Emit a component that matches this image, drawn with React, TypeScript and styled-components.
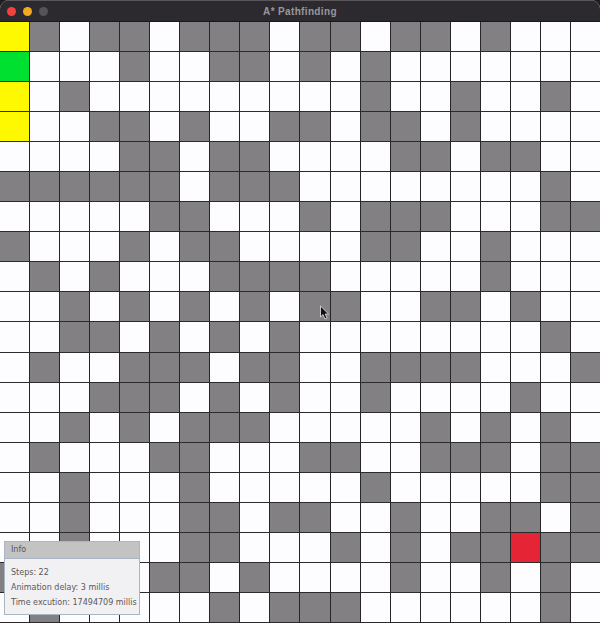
import React from 'react';
import styled, { createGlobalStyle } from 'styled-components';

type CellKind = '.' | '#' | 'y' | 'g' | 'r';

const GRID: string[] = [
  'y#.##.###.##.##.#...',
  'g...#..##.#.#.......',
  'y.#.........#..#..#.',
  'y..##.#..##.##.#....',
  '....##.##....##.##..',
  '######.###........#.',
  '.....##...#.###...##',
  '#...#.##....##..#...',
  '.#.#...####.....#...',
  '..#.#.#.#.##..##.#..',
  '..##.#.#.#........#.',
  '.#..###.##..####...#',
  '...###.#.#..#....#..',
  '..#.#.###.....#.#.#.',
  '.#...##...##..###.##',
  '..#...#.....#.....##',
  '..#...##.##..#..##.#',
  '..#...##...#.#.##r##',
  '#....##.#....#..#.#.',
  '.#.....#.###......#.',
];

const CELL_COLORS: Record<CellKind, string> = {
  '.': '#fdfcfe',
  '#': '#828083',
  y: '#fef800',
  g: '#00e031',
  r: '#e52535',
};

const GlobalStyle = createGlobalStyle`
  html, body {
    margin: 0;
    padding: 0;
    background: #1d1c1f;
    overflow: hidden;
  }
`;

const Window = styled.div`
  position: relative;
  width: 600px;
  height: 623px;
  overflow: hidden;
  border-radius: 9px 9px 0 0;
  background: #fdfcfe;
`;

const TitleBar = styled.header`
  display: flex;
  align-items: center;
  height: 22px;
  box-sizing: border-box;
  padding: 0 0 0 7px;
  gap: 7px;
  background: #2c2a2f;
  border-top: 1px solid #59575b;
  border-bottom: 1px solid #18171a;
`;

const Light = styled.span<{ $color: string }>`
  width: 9px;
  height: 9px;
  border-radius: 50%;
  background: ${(p) => p.$color};
`;

const Title = styled.h1`
  position: absolute;
  top: 5px;
  left: 0;
  right: 0;
  margin: 0;
  text-align: center;
  font: bold 10px/13px "Liberation Sans", Arial, sans-serif;
  letter-spacing: 0.35px;
  color: #99979b;
`;

const Board = styled.div`
  display: grid;
  grid-template-columns: repeat(20, 1fr);
  grid-template-rows: repeat(20, 1fr);
  width: 601px;
  height: 601px;
  margin-left: 0;
  background: #1f1e20;
`;

const Cell = styled.div<{ $kind: CellKind }>`
  background: ${(p) => CELL_COLORS[p.$kind]};
  border-right: 1px solid #262527;
  border-bottom: 1px solid #2b2a2c;
  box-sizing: border-box;
`;

const InfoPanel = styled.section`
  position: absolute;
  left: 4px;
  top: 541px;
  width: 136px;
  height: 74px;
  box-sizing: border-box;
  border: 1px solid #a9b6c4;
  background: #f1f0f2;
`;

const InfoHeader = styled.div`
  height: 17px;
  padding-left: 6px;
  background: #c4c3c4;
  border-bottom: 1px solid #a9b6c4;
  box-sizing: border-box;
  font: 8px/16px "DejaVu Sans", sans-serif;
  color: #555457;
`;

const InfoBody = styled.div`
  display: flex;
  flex-direction: column;
  gap: 5px;
  padding: 9px 0 0 6px;
`;

const InfoLine = styled.div`
  font: 8px/10px "DejaVu Sans", sans-serif;
  color: #59585b;
  white-space: nowrap;
`;

const CursorMark = styled.svg`
  position: absolute;
  left: 319px;
  top: 305px;
`;

export default function App() {
  return (
    <>
      <GlobalStyle />
      <Window>
        <TitleBar>
          <Light $color="#f2423f" />
          <Light $color="#f5a823" />
          <Light $color="#555358" />
          <Title>A* Pathfinding</Title>
        </TitleBar>
        <Board>
          {GRID.flatMap((row, y) =>
            row.split('').map((kind, x) => <Cell key={`${x}-${y}`} $kind={kind as CellKind} />)
          )}
        </Board>
        <CursorMark width="12" height="16" viewBox="0 0 12 16">
          <path d="M1.5 1 L1.5 12 L4 9.6 L6 14 L8 13 L6.2 9 L9.6 9 Z" fill="#111" stroke="#e8e8e8" strokeWidth="0.8" />
        </CursorMark>
        <InfoPanel>
          <InfoHeader>Info</InfoHeader>
          <InfoBody>
            <InfoLine>Steps: 22</InfoLine>
            <InfoLine>Animation delay: 3 millis</InfoLine>
            <InfoLine>Time excution: 17494709 millis</InfoLine>
          </InfoBody>
        </InfoPanel>
      </Window>
    </>
  );
}
